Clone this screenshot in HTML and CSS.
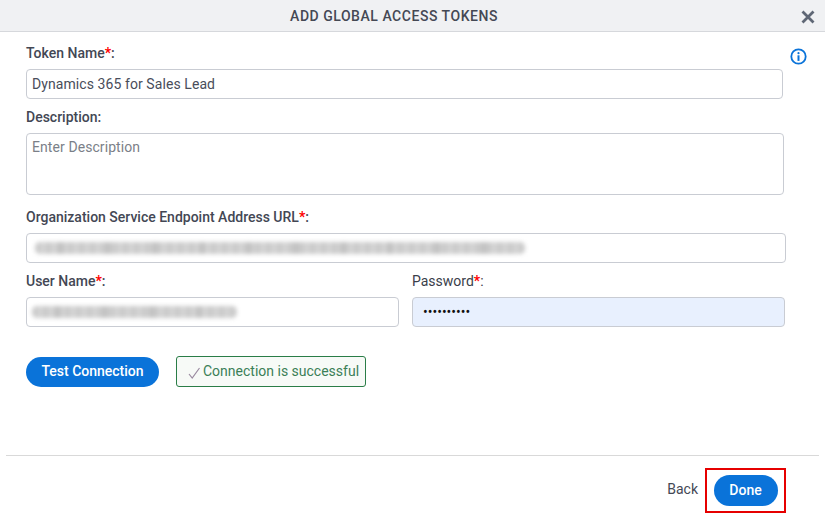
FILE: index.html
```html
<!DOCTYPE html>
<html lang="en">

<head>
    <meta charset="UTF-8">
    <title>Add Global Access Tokens</title>
    <link rel="stylesheet" href="styles.css">
</head>

<body>
    <div class="dialog">
        <div class="dialog-header">
            <h1 class="dialog-title">ADD GLOBAL ACCESS TOKENS</h1>
            <svg class="close-icon" width="14" height="14" viewBox="0 0 14 14">
                <path d="M1.5 1.5L12.5 12.5M12.5 1.5L1.5 12.5" fill="none" stroke="#5f6775" stroke-width="2.8" />
            </svg>
        </div>

        <div class="dialog-body">
            <svg class="info-icon" width="17" height="17" viewBox="0 0 17 17">
                <circle cx="8.5" cy="8.5" r="7.2" fill="none" stroke="#0a73d9" stroke-width="1.8" />
                <circle cx="8.5" cy="5.2" r="1.1" fill="#0a73d9" />
                <rect x="7.5" y="7.3" width="2" height="5.6" fill="#0a73d9" />
            </svg>

            <div class="field field-token">
                <label class="field-label">Token Name<span class="req">*</span>:</label>
                <input class="text-input" type="text" value="Dynamics 365 for Sales Lead">
            </div>

            <div class="field field-desc">
                <label class="field-label">Description:</label>
                <textarea class="text-input text-area" placeholder="Enter Description"></textarea>
            </div>

            <div class="field field-url">
                <label class="field-label">Organization Service Endpoint Address URL<span class="req">*</span>:</label>
                <div class="text-input masked-box">
                    <div class="masked masked-url"></div>
                </div>
            </div>

            <div class="field-row">
                <div class="field field-user">
                    <label class="field-label">User Name<span class="req">*</span>:</label>
                    <div class="text-input masked-box">
                        <div class="masked masked-user"></div>
                    </div>
                </div>
                <div class="field field-pass">
                    <label class="field-label">Password<span class="req">*</span>:</label>
                    <input class="text-input pass-input" type="password" value="0123456789">
                </div>
            </div>

            <div class="test-row">
                <button class="btn btn-test" type="button">Test Connection</button>
                <div class="status-box">
                    <svg class="check-icon" width="13" height="12" viewBox="0 0 13 12">
                        <path d="M1 7L4.2 11L11.5 1" fill="none" stroke="#9a8aa0" stroke-width="1.2" />
                    </svg>
                    <span>Connection is successful</span>
                </div>
            </div>
        </div>

        <div class="dialog-footer">
            <a class="back-link">Back</a>
            <div class="done-mark">
                <button class="btn btn-done" type="button">Done</button>
            </div>
        </div>
    </div>
</body>

</html>
```

FILE: styles.css
```css
* {
    margin: 0;
    padding: 0;
    box-sizing: border-box;
}

body {
    width: 825px;
    height: 519px;
    overflow: hidden;
    background: #fff;
    font-family: Roboto, "Liberation Sans", sans-serif;
    font-size: 14px;
    color: #3e4250;
}

/* header */
.dialog-header {
    height: 32px;
    display: flex;
    align-items: center;
    justify-content: center;
    position: relative;
    background: #f0f1f3;
    border-bottom: 1px solid #d6d8dc;
}

.dialog-title {
    font-size: 14px;
    font-weight: 500;
    color: #444854;
    letter-spacing: 0.53px;
    margin-right: 37px;
}

.close-icon {
    position: absolute;
    top: 10px;
    right: 10px;
}

/* form */
.dialog-body {
    height: 423px;
    padding: 13px 0 0 26px;
    position: relative;
}

.info-icon {
    position: absolute;
    top: 16px;
    right: 18px;
}

.field-label {
    display: block;
    height: 24px;
    line-height: 17px;
    font-size: 14px;
    font-weight: 500;
    color: #434754;
}

.field-pass .field-label {
    font-weight: 400;
    color: #3a3e4a;
}

.req {
    color: #f00;
    font-weight: 700;
}

.text-input {
    display: block;
    width: 100%;
    height: 30px;
    padding: 0 5px;
    border: 1px solid #c9ccd3;
    border-radius: 4px;
    background: #fff;
    font-family: Roboto, "Liberation Sans", sans-serif;
    font-size: 14px;
    letter-spacing: 0.08px;
    color: #494d5a;
    outline: none;
}

.field-token {
    width: 757px;
    height: 64px;
}

.field-desc {
    width: 758px;
    height: 100px;
}

.text-area {
    height: 62px;
    padding-top: 5px;
    resize: none;
}

.text-area::placeholder {
    color: #7b7f88;
    opacity: 1;
}

.field-url {
    width: 760px;
    height: 64px;
}

/* redacted values */
.masked-box {
    display: flex;
    align-items: center;
}

.masked {
    height: 12px;
    border-radius: 5px;
    filter: blur(2px);
    background:
        repeating-linear-gradient(90deg, transparent 0, transparent 23px, #c2c2c2 23px, #c2c2c2 29px, transparent 29px, transparent 47px),
        repeating-linear-gradient(90deg, #cbcbcb 0, #cbcbcb 6px, #d8d8d8 6px, #d0d0d0 11px);
}

.masked-url {
    width: 490px;
    margin-left: 3px;
}

.masked-user {
    width: 205px;
}

.field-row {
    display: flex;
    gap: 13px;
}

.field-user {
    width: 373px;
}

.field-pass {
    width: 373px;
}

.pass-input {
    background: #e8f0fe;
    padding-left: 10px;
    color: #111;
    font-size: 14px;
    letter-spacing: 0;
}

/* test connection */
.test-row {
    display: flex;
    align-items: center;
    gap: 17px;
    margin-top: 29px;
}

.btn {
    border: none;
    border-radius: 15px;
    background: #0a73d9;
    color: #fff;
    font-family: Roboto, "Liberation Sans", sans-serif;
    font-size: 14px;
    font-weight: 500;
    padding-bottom: 2px;
}

.btn-test {
    width: 133px;
    height: 30px;
}

.status-box {
    width: 190px;
    height: 31px;
    display: flex;
    align-items: center;
    gap: 2px;
    padding: 0 0 2px 11px;
    border: 1px solid #2a7d47;
    border-radius: 3px;
    background: #f7faf7;
    color: #3b7f57;
    font-size: 14px;
}

.check-icon {
    margin-top: 5px;
}

/* footer */
.dialog-footer {
    margin: 0 6px;
    height: 64px;
    border-top: 1px solid #d9d9d9;
    display: flex;
    align-items: flex-start;
    justify-content: flex-end;
    padding: 12px 33px 0 0;
}

.back-link {
    margin-top: 13px;
    margin-right: 7px;
    line-height: 17px;
    color: #444854;
}

.done-mark {
    width: 81px;
    height: 45px;
    display: flex;
    align-items: center;
    justify-content: center;
    border: 2px solid #e60000;
}

.btn-done {
    width: 64px;
    height: 31px;
    border-radius: 16px;
}
```
